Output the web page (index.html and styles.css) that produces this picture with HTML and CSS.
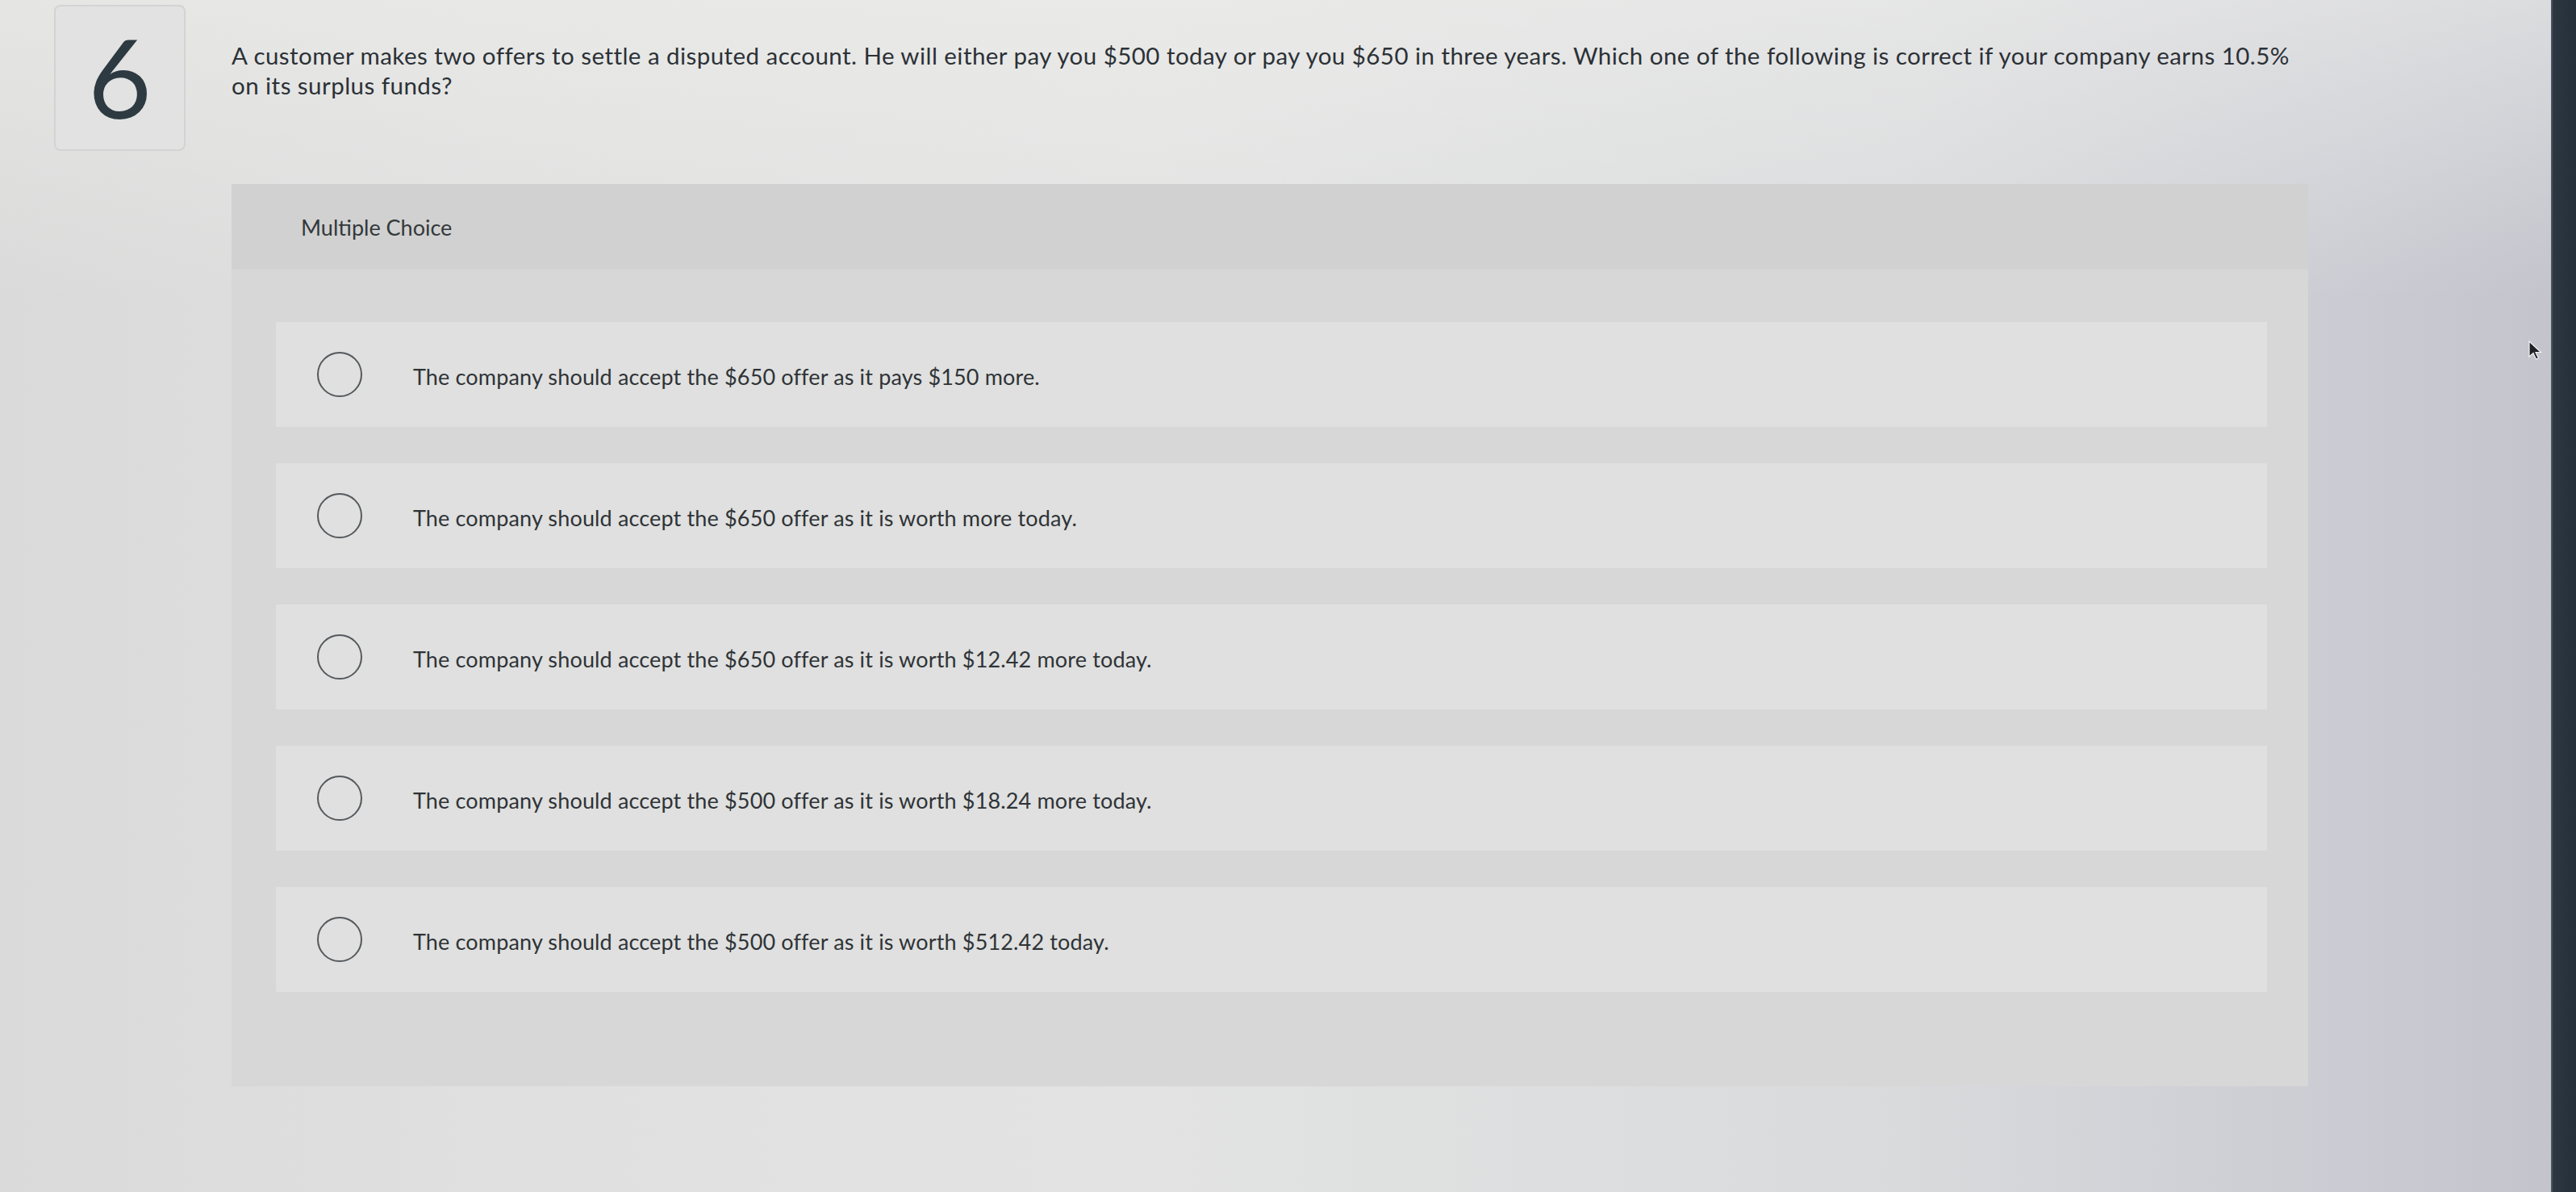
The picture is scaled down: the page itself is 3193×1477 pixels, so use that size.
FILE: index.html
```html
<!DOCTYPE html>
<html lang="en">
<head>
<meta charset="utf-8">
<title>Question 6</title>
<link rel="stylesheet" href="styles.css">
</head>
<body>
<div class="screen">
  <main class="page">
    <section class="qhead">
      <div class="num">6</div>
      <p class="prompt">A customer makes two offers to settle a disputed account. He will either pay you $500 today or pay you $650 in three years. Which one of the following is correct if your company earns 10.5% on its surplus funds?</p>
    </section>
    <section class="panel">
      <div class="panel-head">Multiple Choice</div>
      <div class="options">
        <div class="opt"><span class="radio"></span><span class="opt-text">The company should accept the $650 offer as it pays $150 more.</span></div>
        <div class="opt"><span class="radio"></span><span class="opt-text">The company should accept the $650 offer as it is worth more today.</span></div>
        <div class="opt"><span class="radio"></span><span class="opt-text">The company should accept the $650 offer as it is worth $12.42 more today.</span></div>
        <div class="opt"><span class="radio"></span><span class="opt-text">The company should accept the $500 offer as it is worth $18.24 more today.</span></div>
        <div class="opt"><span class="radio"></span><span class="opt-text">The company should accept the $500 offer as it is worth $512.42 today.</span></div>
      </div>
    </section>
    <svg class="cursor" width="20" height="26" viewBox="0 0 20 26"><path d="M2 1 L2 20 L7 15.5 L10.5 23 L13.5 21.7 L10 14.5 L16.5 14.5 Z" fill="#1e2226" stroke="#f2f2f2" stroke-width="1.2"/></svg>
  </main>
  <div class="bezel"></div>
</div>
</body>
</html>
```
FILE: styles.css
```css
html, body {
  margin: 0;
  padding: 0;
}
body {
  width: 3193px;
  height: 1477px;
  overflow: hidden;
  font-family: "Lato", "Open Sans", sans-serif;
}
.screen {
  display: flex;
  width: 3193px;
  height: 1477px;
}
.page {
  position: relative;
  flex: 1;
  padding: 6px 0 0 67px;
  box-sizing: border-box;
  background:
    linear-gradient(to bottom, rgba(240,240,238,0.55) 0%, rgba(240,240,238,0) 25%),
    linear-gradient(to right, #d9dad9 0%, #dfe0df 20%, #e2e3e2 45%, #d9dadc 75%, #cbccd3 92%, #c3c4cc 100%);
}
.bezel {
  width: 31px;
  background: linear-gradient(to right, #56606b 0, #2b3640 3px, #25303a 100%);
}
.qhead {
  display: flex;
  align-items: flex-start;
  gap: 57px;
}
.num {
  width: 163px;
  height: 181px;
  box-sizing: border-box;
  border: 2px solid #d2d3d2;
  border-radius: 8px;
  background: #e1e2e1;
  display: flex;
  align-items: center;
  justify-content: center;
  font-family: "Lato", sans-serif;
  font-weight: 400;
  font-size: 136px;
  line-height: 1;
  color: #2e3a42;
  padding-bottom: 4px;
}
.prompt {
  margin: 44px 0 0 0;
  width: 2575px;
  font-size: 29.5px;
  line-height: 37px;
  color: #2c3136;
  letter-spacing: 0.45px;
}
.panel {
  margin: 41px 0 0 220px;
  width: 2574px;
  height: 1118px;
  background: #d6d7d6;
  box-sizing: border-box;
}
.panel-head {
  height: 106px;
  background: #d0d1d0;
  display: flex;
  align-items: center;
  padding-left: 86px;
  font-size: 27px;
  color: #34383c;
}
.options {
  display: flex;
  flex-direction: column;
  gap: 45px;
  padding: 65px 51px 0 55px;
}
.opt {
  height: 130px;
  background: #dfe0df;
  display: flex;
  align-items: center;
  padding-left: 51px;
}
.radio {
  width: 56px;
  height: 56px;
  box-sizing: border-box;
  border: 2.5px solid #55595d;
  border-radius: 50%;
  flex: none;
}
.opt-text {
  margin-left: 63px;
  font-size: 27px;
  letter-spacing: 0.15px;
  color: #2f3337;
  padding-top: 4px;
}
.cursor {
  position: absolute;
  left: 3133px;
  top: 422px;
}
```
